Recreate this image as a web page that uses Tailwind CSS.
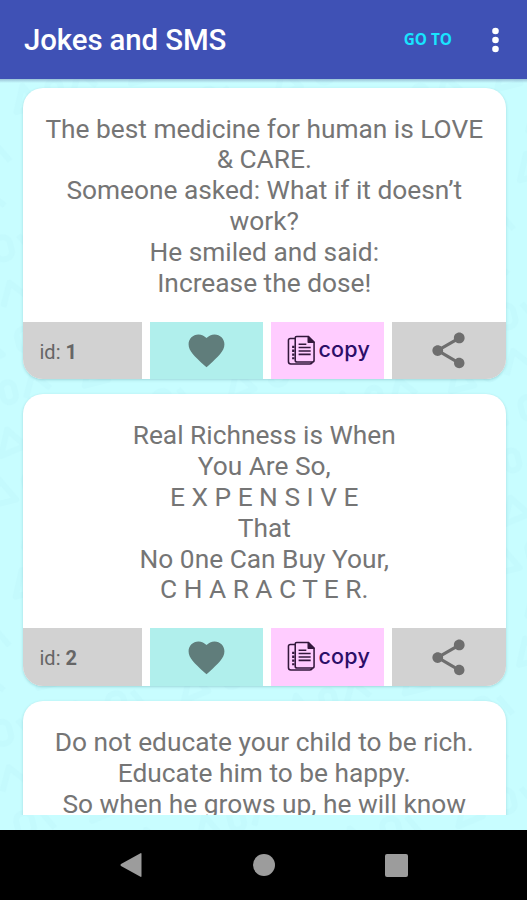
<!DOCTYPE html>
<html lang="en">
<head>
<meta charset="utf-8">
<title>Jokes and SMS</title>
<script src="https://cdn.jsdelivr.net/npm/@tailwindcss/browser@4"></script>
</head>
<body class="w-[527px] h-[900px] overflow-hidden bg-black font-[Roboto,sans-serif]">
<svg class="hidden">
  <symbol id="heart" viewBox="0 0 24 24"><path d="M12 21.35l-1.45-1.32C5.4 15.36 2 12.28 2 8.5 2 5.42 4.42 3 7.5 3c1.74 0 3.41.81 4.5 2.09C13.09 3.81 14.76 3 16.5 3 19.58 3 22 5.42 22 8.5c0 3.78-3.4 6.86-8.55 11.54L12 21.35z"/></symbol>
  <symbol id="share" viewBox="0 0 24 24"><path d="M18 16.08c-.76 0-1.44.3-1.96.77L8.91 12.7c.05-.23.09-.46.09-.7s-.04-.47-.09-.7l7.05-4.11c.54.5 1.25.81 2.04.81 1.66 0 3-1.34 3-3s-1.34-3-3-3-3 1.34-3 3c0 .24.04.47.09.7L8.04 9.81C7.5 9.31 6.79 9 6 9c-1.66 0-3 1.34-3 3s1.34 3 3 3c.79 0 1.5-.31 2.04-.81l7.12 4.16c-.05.21-.08.43-.08.65 0 1.61 1.31 2.92 2.92 2.92s2.92-1.31 2.92-2.92-1.31-2.92-2.92-2.92z"/></symbol>
  <symbol id="copy" viewBox="0 0 30 32"><g fill="none" stroke="#33183c" stroke-width="1.6" stroke-linejoin="round"><path d="M8.500 3.500H3.500Q1.500 3.500 1.500 5.500V27.500Q1.500 30 4 30H23.500Q26 30 26 28"/><path d="M10 1.500H22L28 7.500V26Q28 28 26 28H10.500Q8.500 28 8.500 26V3Q8.500 1.500 10 1.500Z"/><path d="M22 1.500V7.500H28Z" fill="#33183c"/><path d="M12 9.500H20M12 13H24.500M12 16.500H24.500M12 20H24.500"/><path d="M6.500 11V25" stroke-width="2.400" stroke-dasharray="2.500 1.500"/></g></symbol>
</svg>
<header class="flex h-[79px] items-center bg-[#3f51b5] pl-[24px] pr-[28px]">
  <h1 class="grow pt-[3px] text-[29.4px] font-medium leading-none tracking-[-0.1px] text-white">Jokes and SMS</h1>
  <span class="mr-[40px] font-['Open_Sans',sans-serif] text-[15.3px] font-bold leading-none text-[#18e4ff]">GO TO</span>
  <svg class="h-[26px] w-[7px] fill-white" viewBox="0 0 7 26"><circle cx="3.500" cy="4" r="3.300"/><circle cx="3.500" cy="13" r="3.300"/><circle cx="3.500" cy="22" r="3.300"/></svg>
</header>
<main class="relative h-[751px] overflow-hidden bg-[#c8fdff]">
  <svg class="absolute inset-0 h-full w-full" aria-hidden="true">
    <defs><pattern id="motif" width="118" height="94" patternUnits="userSpaceOnUse" patternTransform="rotate(-14)"><g fill="none" stroke="#b6eef6" stroke-width="6" stroke-linejoin="round" opacity=".25"><path d="M8 36L20 12L32 36ZM66 34L78 12L92 30M28 84L40 60L54 80Z"/><rect x="44" y="14" width="13" height="20" rx="6"/><rect x="72" y="60" width="16" height="22" rx="7"/><path d="M98 62L108 82"/></g></pattern></defs>
    <rect width="527" height="751" fill="url(#motif)"/>
  </svg>
  <div class="absolute inset-x-0 top-0 z-10 h-[4px] bg-linear-to-b from-[#6b87ae]/50 to-transparent"></div>
  <div class="relative h-[736px] overflow-hidden pl-[22.5px] pr-[21px] pt-[8.5px] text-[#757575]">
    <article class="mb-[15px] h-[291.7px] overflow-hidden rounded-[20px] bg-white shadow-[0_1px_3px_rgba(0,80,90,0.22)]">
      <p class="h-[234px] whitespace-nowrap pt-[26.2px] text-center text-[26.3px] leading-[30.8px]">The best medicine for human is LOVE<br>&amp; CARE.<br>Someone asked: What if it doesn’t<br>work?<br>He smiled and said:<br>Increase the dose!</p>
      <div class="flex h-[58px] gap-[8px]">
        <div class="flex w-[119px] items-center bg-[#d2d2d2] pl-[17px] pt-[2px] text-[20px] text-[#666]">id:&nbsp;<b>1</b></div>
        <div class="flex w-[113px] items-center justify-center bg-[#b0efec] pb-[1px]"><svg class="h-[43px] w-[43px] fill-[#607d7b]"><use href="#heart"/></svg></div>
        <div class="flex w-[113px] items-center bg-[#ffccff] pb-[1px] pl-[16.5px]"><svg class="h-[31px] w-[29px]"><use href="#copy"/></svg><span class="ml-[2.5px] pb-[1px] font-[Inter,sans-serif] text-[21.5px] font-medium leading-none tracking-[0.2px] text-[#2c0e68]">copy</span></div>
        <div class="flex grow items-center justify-center bg-[#d2d2d2]"><svg class="h-[43px] w-[43px] fill-[#6e6e6e]"><use href="#share"/></svg></div>
      </div>
    </article>
    <article class="mb-[15px] h-[291.7px] overflow-hidden rounded-[20px] bg-white shadow-[0_1px_3px_rgba(0,80,90,0.22)]">
      <p class="h-[234.300px] whitespace-nowrap pt-[26.2px] text-center text-[26.3px] leading-[30.8px]">Real Richness is When<br>You Are So,<br>E X P E N S I V E<br>That<br>No 0ne Can Buy Your,<br>C H A R A C T E R.</p>
      <div class="flex h-[58px] gap-[8px]">
        <div class="flex w-[119px] items-center bg-[#d2d2d2] pl-[17px] pt-[2px] text-[20px] text-[#666]">id:&nbsp;<b>2</b></div>
        <div class="flex w-[113px] items-center justify-center bg-[#b0efec]"><svg class="h-[43px] w-[43px] fill-[#607d7b]"><use href="#heart"/></svg></div>
        <div class="flex w-[113px] items-center bg-[#ffccff] pb-[1px] pl-[16.5px]"><svg class="h-[31px] w-[29px]"><use href="#copy"/></svg><span class="ml-[2.5px] pb-[1px] font-[Inter,sans-serif] text-[21.5px] font-medium leading-none tracking-[0.2px] text-[#2c0e68]">copy</span></div>
        <div class="flex grow items-center justify-center bg-[#d2d2d2]"><svg class="h-[43px] w-[43px] fill-[#6e6e6e]"><use href="#share"/></svg></div>
      </div>
    </article>
    <article class="h-[292px] rounded-[20px] bg-white shadow-[0_1px_3px_rgba(0,80,90,0.22)]">
      <p class="whitespace-nowrap pt-[26.2px] text-center text-[26.3px] leading-[30.8px]">Do not educate your child to be rich.<br>Educate him to be happy.<br>So when he grows up, he will know</p>
    </article>
  </div>
</main>
<nav class="flex h-[70px] items-center justify-between bg-black pl-[119px] pr-[119px]">
  <svg class="h-[26px] w-[23px] fill-[#9c9c9c]" viewBox="0 0 23 26"><path d="M21.500 1.200Q22.500 .800 22.500 2V24Q22.500 25.200 21.500 24.800L2 14Q.800 13 2 12Z"/></svg>
  <div class="h-[22px] w-[22px] rounded-full bg-[#9c9c9c]"></div>
  <div class="h-[23px] w-[23px] rounded-[2px] bg-[#9c9c9c]"></div>
</nav>
</body>
</html>
